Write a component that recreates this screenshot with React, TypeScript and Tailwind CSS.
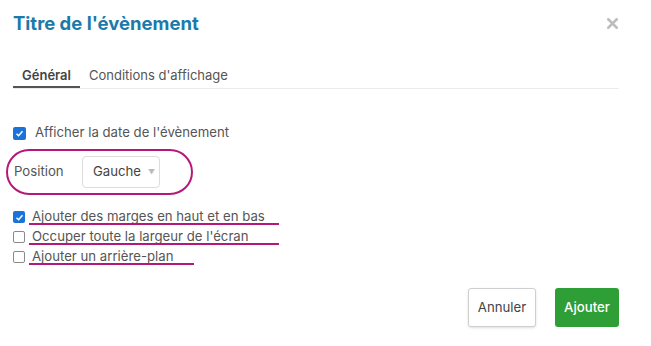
import { X } from "lucide-react";

const font = { fontFamily: "Inter, 'Noto Sans', sans-serif" };

function Box({ checked, size = "w-[13px] h-[13px]" }: { checked?: boolean; size?: string }) {
  return checked ? (
    <span className={`${size} shrink-0 rounded-[2px] bg-[#1a73d9] grid place-items-center`}>
      <svg viewBox="0 0 12 12" className="w-[9px] h-[9px]">
        <path d="M2 6.3 L4.8 9 L10 3" fill="none" stroke="white" strokeWidth="2" />
      </svg>
    </span>
  ) : (
    <span className={`${size} shrink-0 rounded-[2px] border border-[#8a8a8a] bg-white`} />
  );
}

function Row({ label, checked, line }: { label: string; checked?: boolean; line: string }) {
  return (
    <div className="relative flex h-[20px] items-center gap-[7px]">
      <Box checked={checked} size="w-[12px] h-[12px]" />
      <span>{label}</span>
      <div className={`absolute left-[16px] top-[16px] h-[2px] bg-[#b5187a] ${line}`} />
    </div>
  );
}

export default function App() {
  return (
    <div className="h-[346px] w-[651px] bg-white text-[13.2px] text-[#555]" style={font}>
      <div className="flex items-center justify-between pl-[13px] pr-[30px] pt-[10px]">
        <h1 className="text-[18.5px] font-bold text-[#1b7aa9]">Titre de l'évènement</h1>
        <X size={17} strokeWidth={3.5} className="text-[#bdbdbd]" />
      </div>

      <div className="mx-[13px] mr-[32px] mt-[28px] flex border-b border-[#ececec] text-[13px]">
        <div className="border-b-2 border-[#555] px-[9px] pb-[1px] font-semibold text-[#444]">Général</div>
        <div className="px-[9px] pb-[1px] text-[#555]">Conditions d'affichage</div>
      </div>

      <div className="mt-[34px] flex items-center gap-[9px] pl-[13px]">
        <Box checked />
        <span>Afficher la date de l'évènement</span>
      </div>

      <div className="ml-[6px] mt-[6px] flex h-[46px] w-[187px] items-center rounded-full border-2 border-[#b5187a] pl-[6px]">
        <span className="w-[68px]">Position</span>
        <div className="flex h-[32px] w-[78px] items-center gap-[7px] rounded-[4px] border border-[#dcdcdc] pl-[10px] text-[#444]">
          Gauche
          <span className="pt-[2px] text-[7px] text-[#bbb]">▼</span>
        </div>
      </div>

      <div className="mt-[12px] pl-[13px]">
        <Row checked label="Ajouter des marges en haut et en bas" line="w-[250px]" />
        <Row label="Occuper toute la largeur de l'écran" line="w-[250px]" />
        <Row label="Ajouter un arrière-plan" line="w-[165px]" />
      </div>

      <div className="mt-[21px] flex justify-end gap-[19px] pr-[32px]">
        <button className="h-[39px] w-[68px] rounded-[3px] border border-[#cfcfcf] bg-white text-[#444] shadow-sm">Annuler</button>
        <button className="h-[39px] w-[64px] rounded-[3px] bg-[#2e9e37] font-medium text-white">Ajouter</button>
      </div>
    </div>
  );
}
